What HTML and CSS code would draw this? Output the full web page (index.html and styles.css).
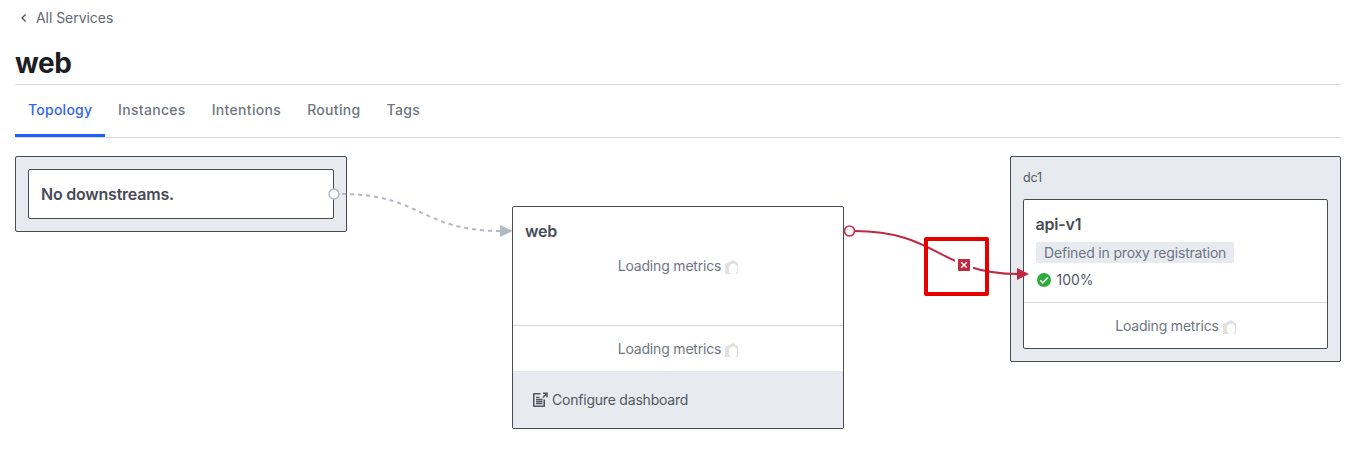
FILE: index.html
```html
<!DOCTYPE html>
<html lang="en">
<head>
<meta charset="utf-8">
<title>web</title>
<link rel="stylesheet" href="styles.css">
</head>
<body>
<svg class="defs" width="0" height="0">
  <symbol id="spinner" viewBox="0 0 13 14">
    <path d="M0 14V4L8 0l5 3v10.500l-1 .5h-1.500L12 12V6L9.500 3.800H7L4 6v5.500L6 14z" fill="#e1e1e1"/>
  </symbol>
</svg>
<header class="page-header">
  <nav class="breadcrumb">
    <svg width="16" height="16" viewBox="0 0 16 16"><path d="M10.600 4.500 7 8l3.600 3.500" fill="none" stroke="#525761" stroke-width="1.400"/></svg>
    <a>All Services</a>
  </nav>
  <h1>web</h1>
</header>
<nav class="tabs">
  <a class="tab active">Topology</a>
  <a class="tab">Instances</a>
  <a class="tab">Intentions</a>
  <a class="tab">Routing</a>
  <a class="tab">Tags</a>
</nav>
<main class="topology">
  <section class="group downstreams">
    <div class="card empty">No downstreams.</div>
  </section>
  <section class="card service">
    <h2>web</h2>
    <div class="metrics chart">Loading metrics <svg class="spinner"><use href="#spinner"/></svg></div>
    <div class="metrics stats">Loading metrics <svg class="spinner"><use href="#spinner"/></svg></div>
    <a class="configure">
      <svg width="16" height="16" viewBox="0 0 16 16" fill="none" stroke="#52565e">
        <path d="M8.500 1.700H1.750V14.250H12.250V7.500" stroke-width="1.600" stroke-linejoin="round"/>
        <path d="M4 5.400h3.500M4 7.500h6.500M4 9.500h6.500M4 11.500h6.500" stroke-width="1.400"/>
        <path d="M11 1.300h4v4M14.800 1.500 10.800 5.500" stroke-width="1.500"/>
      </svg>
      <span>Configure dashboard</span>
    </a>
  </section>
  <section class="group upstreams">
    <p class="datacenter">dc1</p>
    <div class="card">
      <div class="details">
        <h2>api-v1</h2>
        <span class="badge">Defined in proxy registration</span>
        <div class="health">
          <svg width="14" height="14" viewBox="0 0 14 14"><circle cx="7" cy="7" r="7" fill="#2eab3a"/><path d="m3.200 7.200 2.500 2.500 5.200-5.200" fill="none" stroke="#fff" stroke-width="1.600"/></svg>
          <span>100%</span>
        </div>
      </div>
      <div class="metrics stats">Loading metrics <svg class="spinner"><use href="#spinner"/></svg></div>
    </div>
  </section>
  <svg class="connections" width="1326" height="273" viewBox="15 156 1326 273">
    <g fill="none" stroke-width="2">
      <path d="M342 194C421 194 421 231 501 231" stroke="#b2b8c5" stroke-dasharray="4 4"/>
      <path d="M854 231C939 231 939 274 1018 274" stroke="#bf2a41"/>
    </g>
    <path d="M500 225v12l12.500-6z" fill="#b2b8c5"/>
    <path d="M1017 268v12l12-6z" fill="#bf2a41"/>
    <circle cx="334" cy="194" r="5" fill="#fff" stroke="#b2b8c5" stroke-width="1.500"/>
    <circle cx="849.500" cy="231" r="5" fill="#fff" stroke="#c7354a" stroke-width="1.700"/>
    <path d="M955 256h18v18h-18z" fill="#fff"/>
    <rect x="958" y="259" width="12" height="12" rx="1" fill="#bf2a41"/>
    <path d="m961.200 262.200 5.600 5.600m0-5.600-5.600 5.600" stroke="#fff" stroke-width="1.400"/>
  </svg>
  <div class="highlight"></div>
</main>
</body>
</html>
```
FILE: styles.css
```css
* { box-sizing: border-box; }
body {
  margin: 0;
  padding: 0 15px;
  background: #fff;
  color: #6f7682;
  font: 14px/20px Inter, sans-serif;
  letter-spacing: -.18px;
}
h1, h2, p { margin: 0; }
svg { flex: none; }
.defs { position: absolute; }
.page-header {
  height: 85px;
  border-bottom: 1px solid #d5d9e0;
}
.breadcrumb {
  display: flex;
  align-items: center;
  gap: 5px;
  padding-top: 8px;
  color: #626873;
  letter-spacing: -.05px;
}
h1 {
  padding-top: 17px;
  color: #1d1e23;
  font-size: 28px;
  line-height: 36px;
  font-weight: 700;
  letter-spacing: -.4px;
}
.tabs {
  display: flex;
  height: 53px;
  border-bottom: 1px solid #d9dce3;
}
.tab {
  height: 52px;
  padding: 15px 13px 0;
  font-weight: 500;
  letter-spacing: .32px;
}
.active {
  width: 90px;
  color: #2f67ee;
  border-bottom: 3px solid #1f60ff;
  letter-spacing: .25px;
}
.topology {
  position: relative;
  display: grid;
  grid-template-columns: 332px 332px 331px;
  column-gap: 165px;
  justify-content: start;
  align-items: start;
  margin-top: 18px;
}
.group, .card {
  border: 1px solid #474b55;
  border-radius: 2px;
}
.group {
  padding: 12px;
  background: #e7eaef;
}
.card { background: #fff; }
.empty {
  padding: 14px 12px;
  color: #474b55;
  font-size: 16px;
  font-weight: 600;
  letter-spacing: -.22px;
}
h2 {
  color: #474b55;
  font-size: 16px;
  line-height: 24px;
  font-weight: 600;
  letter-spacing: -.2px;
}
.service {
  height: 223px;
  margin-top: 50px;
}
.service h2 { padding: 12px 12px 0; }
.metrics {
  display: flex;
  justify-content: center;
  gap: 4px;
}
.spinner {
  width: 13px;
  height: 14px;
  margin-top: 4px;
}
.chart {
  height: 82px;
  padding-top: 13px;
}
.stats {
  height: 46px;
  padding-top: 13px;
  border-top: 1px solid #d5d8df;
}
.configure {
  display: flex;
  align-items: center;
  gap: 4px;
  height: 57px;
  padding: 0 19px;
  background: #e7eaef;
  color: #525761;
  letter-spacing: -.21px;
}
.upstreams {
  width: 331px;
  margin-left: 1px;
  padding-top: 10px;
}
.datacenter {
  height: 32px;
  padding-top: 1px;
  color: #525761;
  font-size: 12.5px;
}
.details {
  height: 102px;
  padding: 12px 12px 0;
}
.details h2 { margin-left: -.5px; }
.badge {
  display: block;
  width: fit-content;
  height: 21px;
  margin-top: 6px;
  padding: 0 8px;
  border-radius: 2px;
  background: #e7eaef;
  line-height: 22px;
}
.health {
  display: flex;
  align-items: center;
  gap: 6px;
  padding: 7px 0;
  color: #525761;
  letter-spacing: 0;
}
.health svg { margin-left: .5px; }
.connections {
  position: absolute;
  top: 0;
  left: 0;
}
.highlight {
  position: absolute;
  top: 81px;
  left: 909px;
  width: 65px;
  height: 59px;
  border: 4px solid #e60000;
  border-radius: 2px;
}
```
